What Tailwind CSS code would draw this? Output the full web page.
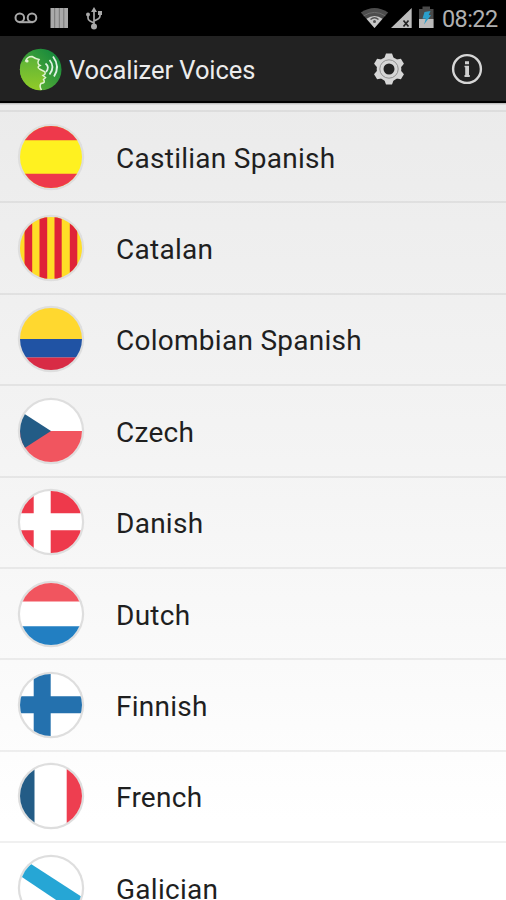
<!DOCTYPE html>
<html lang="en">
<head>
<meta charset="utf-8">
<title>Vocalizer Voices</title>
<script src="https://cdn.jsdelivr.net/npm/@tailwindcss/browser@4"></script>
</head>
<body class="w-[506px] h-[900px] overflow-hidden bg-white font-['Roboto',sans-serif]">
<div class="flex h-[900px] flex-col overflow-hidden">
  <div class="flex h-9 shrink-0 items-center bg-black">
    <svg class="h-9 w-[120px]" viewBox="0 0 120 36" fill="none" stroke="#a8a8a8" stroke-width="2">
      <circle cx="19.8" cy="17.7" r="4.3"/><circle cx="32" cy="17.7" r="4.3"/><path d="M19 22.2H33"/>
      <path d="M50.5 8H68V28H50.5Z" fill="#aaa" stroke="none"/><path d="M54.7 8V28M59.3 8V28M63.8 8V28" stroke="#777" stroke-width="1"/>
      <path d="M94 9V27M88 14V18Q88 20 90 21L94 23M100 13V16Q100 18 98 19L94 21" stroke-width="1.7"/>
      <g fill="#a8a8a8" stroke="none"><path d="M94 7L97 12H91Z"/><circle cx="94" cy="26.5" r="3"/><circle cx="88" cy="14.5" r="2"/><path d="M98 11H102V15H98Z"/></g>
    </svg>
    <div class="grow"></div>
    <svg class="h-9 w-[82px]" viewBox="360 0 82 36">
      <path d="M360.8 12.5Q374.5 3.5 388.2 12.5L374.5 28Z" fill="#4c4c4c"/>
      <path d="M366.5 18.7Q374.5 13.5 382.5 18.7L374.5 28Z" fill="#c8c8c8"/>
      <path d="M363.7 15.8Q374.5 9 385.3 15.8" fill="none" stroke="#6b6b6b" stroke-width="1"/>
      <path d="M370.5 19.5Q374.5 16 378.5 19.5" fill="none" stroke="#555" stroke-width="1.5"/><circle cx="374.5" cy="21.5" r="1.5" fill="#555"/>
      <path d="M391 28L411.7 8V28Z" fill="#bdbdbd"/><path d="M403.5 20.5L408.5 26.5M408.5 20.5L403.5 26.5" stroke="#222" stroke-width="1.7"/>
      <path d="M419 9H422.5V6.5H430V9H433.5V28H419Z" fill="#4a4a4a"/><path d="M419 19H433.5V28H419Z" fill="#bbb"/>
      <path d="M424.5 12L430.5 11L428.7 15L431 15.3L424 24.5L425.8 18.8L422.5 18.5Z" fill="#2b9fcb"/>
    </svg>
    <div class="w-[64px] whitespace-nowrap pt-px text-[23.5px] leading-9 tracking-[-0.6px] text-[#b0b0b0]">08:22</div>
  </div>
  <div class="flex h-[67px] shrink-0 items-center border-b-2 border-black bg-[#222]">
    <svg class="ml-[19px] h-[44px] w-[44px]" viewBox="19 47 44 44">
      <defs>
        <linearGradient id="back" x1="0" y1="1" x2="1" y2="0"><stop offset=".3" stop-color="#4faa35"/><stop offset="1" stop-color="#078040"/></linearGradient>
        <linearGradient id="face" x1="0" y1="0" x2="0" y2="1"><stop stop-color="#5cb339"/><stop offset="1" stop-color="#93cb27"/></linearGradient>
        <clipPath id="badge"><circle cx="40.7" cy="69.5" r="20.8"/></clipPath>
      </defs>
      <g clip-path="url(#badge)">
        <path d="M19 47H63V91H19Z" fill="url(#back)"/>
        <path d="M19 64L26 60Q29 55.5 34 57Q36 59 39 59.5Q36.5 63.5 40 65.5Q36.5 67 39.5 69L44.5 71.5Q46.5 74 43 75.5L45.5 77.5L43.5 79.5Q46 83 41 83.5Q39 86 41.5 91H19Z" fill="url(#face)"/>
        <path d="M25.5 61.5Q27 56.5 32 56.5Q36 59 39 59.5Q36.5 63.5 40 65.5Q36.5 67 39.5 69L44.5 71.5Q46.5 74 43 75.5L45.5 77.5L43.5 79.5Q46 83 41 83.5Q39 86 41.5 90" fill="none" stroke="#e0f2d0" stroke-width="1.5"/>
        <circle cx="27" cy="61" r="1.6" fill="#e0f2d0"/>
        <path d="M45.5 63.5Q50 67 46 72M49.5 60Q55.5 67 49.5 74.5M53 56.5Q60.5 66.5 54 76.5" fill="none" stroke="#dff2e3" stroke-width="1.8"/>
      </g>
    </svg>
    <h1 class="ml-[6px] grow whitespace-nowrap pt-[3px] text-[25.5px] leading-8 tracking-[-0.05px] text-[#ececec]">Vocalizer Voices</h1>
    <svg class="mr-[46.5px] h-8 w-8 shrink-0" viewBox="-16 -16 32 32">
      <g fill="#d6d6d6"><circle r="12.3"/><path id="cog" d="M-5 -10L-3 -15.5H3L5 -10V10L3 15.5H-3L-5 10Z"/><use href="#cog" transform="rotate(60)"/><use href="#cog" transform="rotate(120)"/></g>
      <circle r="9.2" fill="none" stroke="#888" stroke-width=".9"/><circle r="5.5" fill="#222"/>
    </svg>
    <svg class="mr-[23px] h-8 w-8 shrink-0" viewBox="-16 -16 32 32">
      <circle r="13.9" fill="none" stroke="#d6d6d6" stroke-width="2.4"/><path d="M-2 -7.7H2V-4.7H-2ZM-2.5 -3.3H2V6H2.8V8H-2.5V6H-1.8V-1.8H-2.5Z" fill="#cfcfcf"/>
    </svg>
  </div>
  <main class="flex min-h-0 grow flex-col bg-linear-to-b from-[#ebebeb] from-0% via-[#f5f5f5] via-50% to-white to-90%">
    <div class="h-[9px] shrink-0 border-b-2 border-black/6 bg-linear-to-b from-black/25 to-transparent to-30% bg-clip-padding"></div>
    <svg class="absolute h-0 w-0" aria-hidden="true"><defs><clipPath id="disc"><circle r="31"/></clipPath></defs></svg>
    <ul id="voices" class="text-[28px] leading-8 tracking-[0.27px] text-[#1f1f1f]"></ul>
  </main>
</div>
<script>
const voices = [
  ['Castilian Spanish', '<path fill="#fff120" d="M-31-31h62v62h-62z"/><path fill="#ee394b" d="M-31-31h62v14.3h-62zM-31 16.7h62v15h-62z"/>'],
  ['Catalan', '<path fill="#ffde27" d="M-31-31h62v62h-62z"/><path fill="#df2338" d="M-26.5-31h7.7v62h-7.7zM-11.5-31h7.7v62h-7.7zM3.5-31h7.2v62h-7.2zM18.8-31h7.5v62h-7.5z"/>'],
  ['Colombian Spanish', '<path fill="#ffd82f" d="M-31-31h62v31h-62z"/><path fill="#2053a4" d="M-31 0h62v18.5h-62z"/><path fill="#d82b45" d="M-31 18.5h62v13h-62z"/>'],
  ['Czech', '<path fill="#fff" d="M-31-31h62v62h-62z"/><path fill="#f1555f" d="M-31 0h62v31h-62z"/><path fill="#235c86" d="M-31-20L0 0L-31 20z"/>'],
  ['Danish', '<path fill="#fff" d="M-31-31h62v62h-62z"/><path fill="#ee394b" d="M-30-31h12.7v22.3h-12.7zM-.3-31h30v22.3h-30zM-30 8.3h12.7v23h-12.7zM-.3 8.3h30v23h-30z"/>'],
  ['Dutch', '<path fill="#fff" d="M-31-31h62v62h-62z"/><path fill="#f1555f" d="M-31-31h62v18.5h-62z"/><path fill="#227fc2" d="M-31 12.2h62v20h-62z"/>'],
  ['Finnish', '<path fill="#fff" d="M-31-31h62v62h-62z"/><path fill="#2471ae" d="M-17.3-31h17v62h-17zM-31-8.7h62v17h-62z"/>'],
  ['French', '<path fill="#fff" d="M-31-31h62v62h-62z"/><path fill="#235c86" d="M-31-31h14.5v62h-14.5z"/><path fill="#ee3e50" d="M15.7-31h16v62h-16z"/>'],
  ['Galician', '<path fill="#fff" d="M-31-31h62v62h-62z"/><path fill="#26a6d5" d="M-32-13L-20-24L31 9V22L23 24z"/>'],
];
document.getElementById('voices').innerHTML = voices.map(([name, flag]) => `
  <li class="flex h-[91.4px] items-center border-b-2 border-black/6">
    <svg class="ml-[17.3px] h-[68px] w-[68px] shrink-0" viewBox="-34 -34 68 68"><circle r="33.2" fill="#dedede"/><g clip-path="url(#disc)">${flag}</g></svg>
    <span class="ml-[30.7px] whitespace-nowrap pt-[4px]">${name}</span>
  </li>`).join('');
</script>
</body>
</html>
